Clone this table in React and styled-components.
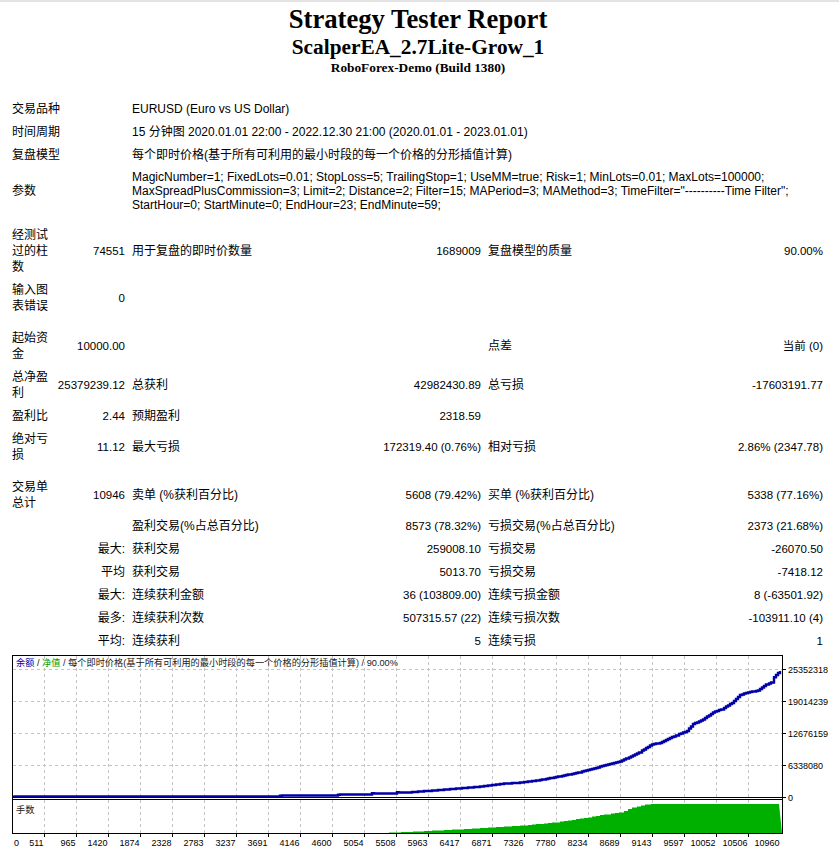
import React from 'react';
import styled, { createGlobalStyle } from 'styled-components';

const GlobalStyle = createGlobalStyle`
  body {
    margin: 0;
    background: #fff;
    color: #000;
    font-family: "Liberation Sans", "Noto Sans CJK SC", sans-serif;
  }
`;

const Page = styled.div`
  border-top: 2px solid #e3e3e3;
  width: 839px;
`;

const Header = styled.div`
  width: 820px;
  margin-left: 8px;
  text-align: center;
  font-family: "Liberation Serif", "Times New Roman", serif;
  font-weight: bold;
`;

const Title = styled.div`
  font-size: 26.67px;
  line-height: 34px;
`;

const SubTitle = styled.div`
  font-size: 21.33px;
  line-height: 22px;
`;

const Server = styled.div`
  font-size: 13.33px;
  line-height: 20px;
`;

const Table = styled.div`
  display: grid;
  grid-template-columns: 37px 69px 240px 102px 200px 128px;
  column-gap: 7px;
  row-gap: 1px;
  width: 811px;
  margin: 20px 0 0 12px;
  font-size: 11.5px;
  line-height: 16px;
`;

const Cell = styled.div`
  grid-column: span ${p => p.$span || 1};
  align-self: center;
  padding: 3px 0;
  text-align: ${p => (p.$right ? 'right' : 'left')};
  font-size: ${p => (p.$label ? '12px' : '11.5px')};
  line-height: ${p => p.$lh || 16}px;
  white-space: ${p => (p.$nowrap ? 'nowrap' : 'normal')};
`;

const InfoValue = styled(Cell)`
  font-size: 12px;
`;

const Spacer = styled.div`
  grid-column: 1 / -1;
  height: ${p => p.$h || 8}px;
`;

const ChartFrame = styled.svg`
  display: block;
  margin: 3px 0 0 12px;
  font-family: "Liberation Sans", "Noto Sans CJK SC", sans-serif;
  font-size: 9px;
`;

const info = [
  ['交易品种', 'EURUSD (Euro vs US Dollar)'],
  ['时间周期', '15 分钟图 2020.01.01 22:00 - 2022.12.30 21:00 (2020.01.01 - 2023.01.01)'],
  ['复盘模型', '每个即时价格(基于所有可利用的最小时段的每一个价格的分形插值计算)'],
];

const params =
  'MagicNumber=1; FixedLots=0.01; StopLoss=5; TrailingStop=1; UseMM=true; Risk=1; MinLots=0.01; MaxLots=100000; MaxSpreadPlusCommission=3; Limit=2; Distance=2; Filter=15; MAPeriod=3; MAMethod=3; TimeFilter="----------Time Filter"; StartHour=0; StartMinute=0; EndHour=23; EndMinute=59;';

// label, value, label, value, label, value  (null = empty pair)
const block1 = [
  ['经测试过的柱数', '74551', '用于复盘的即时价数量', '1689009', '复盘模型的质量', '90.00%'],
  ['输入图表错误', '0', null, null, null, null],
];

const block2 = [
  ['起始资金', '10000.00', '', '', '点差', '当前 (0)'],
  ['总净盈利', '25379239.12', '总获利', '42982430.89', '总亏损', '-17603191.77'],
  ['盈利比', '2.44', '预期盈利', '2318.59', '', ''],
  ['绝对亏损', '11.12', '最大亏损', '172319.40 (0.76%)', '相对亏损', '2.86% (2347.78)'],
];

const trades = [
  ['交易单总计', '10946', '卖单 (%获利百分比)', '5608 (79.42%)', '买单 (%获利百分比)', '5338 (77.16%)'],
  ['', '', '盈利交易(%占总百分比)', '8573 (78.32%)', '亏损交易(%占总百分比)', '2373 (21.68%)'],
];

const extremes = [
  ['最大:', '获利交易', '259008.10', '亏损交易', '-26070.50'],
  ['平均', '获利交易', '5013.70', '亏损交易', '-7418.12'],
  ['最大:', '连续获利金额', '36 (103809.00)', '连续亏损金额', '8 (-63501.92)'],
  ['最多:', '连续获利次数', '507315.57 (22)', '连续亏损次数', '-103911.10 (4)'],
  ['平均:', '连续获利', '5', '连续亏损', '1'],
];

function StatRow({ row }) {
  const cells = [];
  for (let i = 0; i < 6; i += 2) {
    if (row[i] === null) {
      cells.push(<Cell key={i} $span={2} />);
      continue;
    }
    cells.push(<Cell key={i} $label>{row[i]}</Cell>);
    cells.push(<Cell key={i + 1} $right $nowrap>{row[i + 1]}</Cell>);
  }
  return cells;
}

function ExtremeRow({ row }) {
  return (
    <>
      <Cell $span={2} $right $label $nowrap>{row[0]}</Cell>
      <Cell $label>{row[1]}</Cell>
      <Cell $right $nowrap>{row[2]}</Cell>
      <Cell $label>{row[3]}</Cell>
      <Cell $right $nowrap>{row[4]}</Cell>
    </>
  );
}

// chart data in page coordinates
const balance = [
  [13, 797.7], [280, 797.7], [280, 796.7], [338, 796.7], [338, 795.7], [372, 795.7], [372, 794.3],
  [397, 794.3], [397, 793.3], [410, 793.3], [420, 792.5], [440, 791], [460, 789.3], [480, 787.7],
  [500, 785], [520, 783.7], [540, 781], [560, 777.3], [580, 773.3], [600, 767.7], [620, 762.3],
  [627, 759.3], [640, 753], [652, 745.3], [660, 744], [668, 740], [677, 736], [687, 732], [693, 725],
  [703, 720.7], [713, 713.3], [722, 710], [732, 704], [740, 696], [748, 693.3], [758, 691.7],
  [767, 685], [772, 683.3], [774, 678.3], [781, 670.7],
];

const lots = [
  [381, 834], [420, 832.3], [460, 830.3], [492, 828.3], [524, 826.3], [556, 823.3], [588, 818.3],
  [607, 815], [620, 813.3], [633, 808.3], [647, 805], [782, 805],
];

function stairs(pts, step) {
  const out = [pts[0]];
  for (let i = 1; i < pts.length; i++) {
    const [x0, y0] = pts[i - 1];
    const [x1, y1] = pts[i];
    if (x1 - x0 <= step) {
      out.push([x1, out[out.length - 1][1]], [x1, y1]);
      continue;
    }
    for (let x = x0 + step; x < x1 + 0.01; x += step) {
      const xx = Math.min(x, x1);
      const y = Math.round((y0 + ((y1 - y0) * (xx - x0)) / (x1 - x0)) * 2) / 2;
      out.push([xx, out[out.length - 1][1]], [xx, y]);
    }
  }
  return out.map(p => p.join(',')).join(' ');
}

const xLabels = ['511', '965', '1420', '1874', '2328', '2783', '3237', '3691', '4146', '4600', '5054', '5508',
  '5963', '6417', '6871', '7326', '7780', '8234', '8689', '9143', '9597', '10052', '10506', '10960'];

const yLabels = [['25352318', 670.5], ['19014239', 702.5], ['12676159', 734.5], ['6338080', 766.5], ['0', 798.5]];

function Chart() {
  const grid = '#c4c4c4';
  const vLines = Array.from({ length: 23 }, (_, k) => 44.5 + 32 * k);
  const lotsTop = stairs(lots, 4);
  return (
    <ChartFrame width="820" height="200" viewBox="12 656 820 200">
      <rect x="12" y="656" width="820" height="200" fill="#fff" />
      {vLines.map(x => (
        <g key={x} stroke={grid} strokeDasharray="3 3">
          <line x1={x} y1="657" x2={x} y2="798" />
          <line x1={x} y1="801" x2={x} y2="834" />
        </g>
      ))}
      {[670.5, 702.5, 734.5, 766.5].map(y => (
        <line key={y} x1="13" y1={y} x2="782" y2={y} stroke={grid} strokeDasharray="3 3" />
      ))}
      <polygon points={`381,834 ${lotsTop} 782,834`} fill="#00b000" />
      <polyline points={stairs(balance, 2)} fill="none" stroke="#0000a8" strokeWidth="2.4" />
      <g stroke="#000" strokeWidth="1" fill="none">
        <line x1="12.5" y1="656" x2="12.5" y2="835" />
        <line x1="12" y1="656.5" x2="783" y2="656.5" />
        <line x1="782.5" y1="656" x2="782.5" y2="835" />
        <line x1="12" y1="798.5" x2="783" y2="798.5" />
        <line x1="12" y1="800.5" x2="783" y2="800.5" />
        <line x1="12" y1="834.5" x2="783" y2="834.5" />
        {yLabels.map(([, y]) => <line key={y} x1="783" y1={y} x2="786" y2={y} />)}
        {vLines.map(x => <line key={x} x1={x} y1="835" x2={x} y2="838" />)}
      </g>
      {yLabels.map(([t, y]) => (
        <text key={t} x="788" y={y + 3.5}>{t}</text>
      ))}
      <text x="14" y="846.5">0</text>
      {xLabels.map((t, k) => (
        <text key={t} x={43.5 + 32 * k} y="846.5" textAnchor="end">{t}</text>
      ))}
      <text x="16" y="667" fontSize="9.2">
        <tspan fill="#0000a8">余额</tspan>
        <tspan fill="#202020"> / </tspan>
        <tspan fill="#00a000">净值</tspan>
        <tspan fill="#202020"> / 每个即时价格(基于所有可利用的最小时段的每一个价格的分形插值计算) / 90.00%</tspan>
      </text>
      <text x="16" y="814" fontSize="9.2" fill="#202020">手数</text>
    </ChartFrame>
  );
}

export default function App() {
  return (
    <Page>
      <GlobalStyle />
      <Header>
        <Title>Strategy Tester Report</Title>
        <SubTitle>ScalperEA_2.7Lite-Grow_1</SubTitle>
        <Server>RoboForex-Demo (Build 1380)</Server>
      </Header>
      <Table>
        {info.map(([l, v]) => (
          <React.Fragment key={l}>
            <Cell $span={2} $label $nowrap>{l}</Cell>
            <InfoValue $span={4}>{v}</InfoValue>
          </React.Fragment>
        ))}
        <Cell $span={2} $label>参数</Cell>
        <InfoValue $span={4} $lh={14}>{params}</InfoValue>
        <Spacer $h={7} />
        {block1.map((r, i) => <StatRow key={'a' + i} row={r} />)}
        <Spacer />
        {block2.map((r, i) => <StatRow key={'b' + i} row={r} />)}
        <Spacer />
        {trades.map((r, i) => <StatRow key={'c' + i} row={r} />)}
        {extremes.map((r, i) => <ExtremeRow key={'d' + i} row={r} />)}
      </Table>
      <Chart />
    </Page>
  );
}
